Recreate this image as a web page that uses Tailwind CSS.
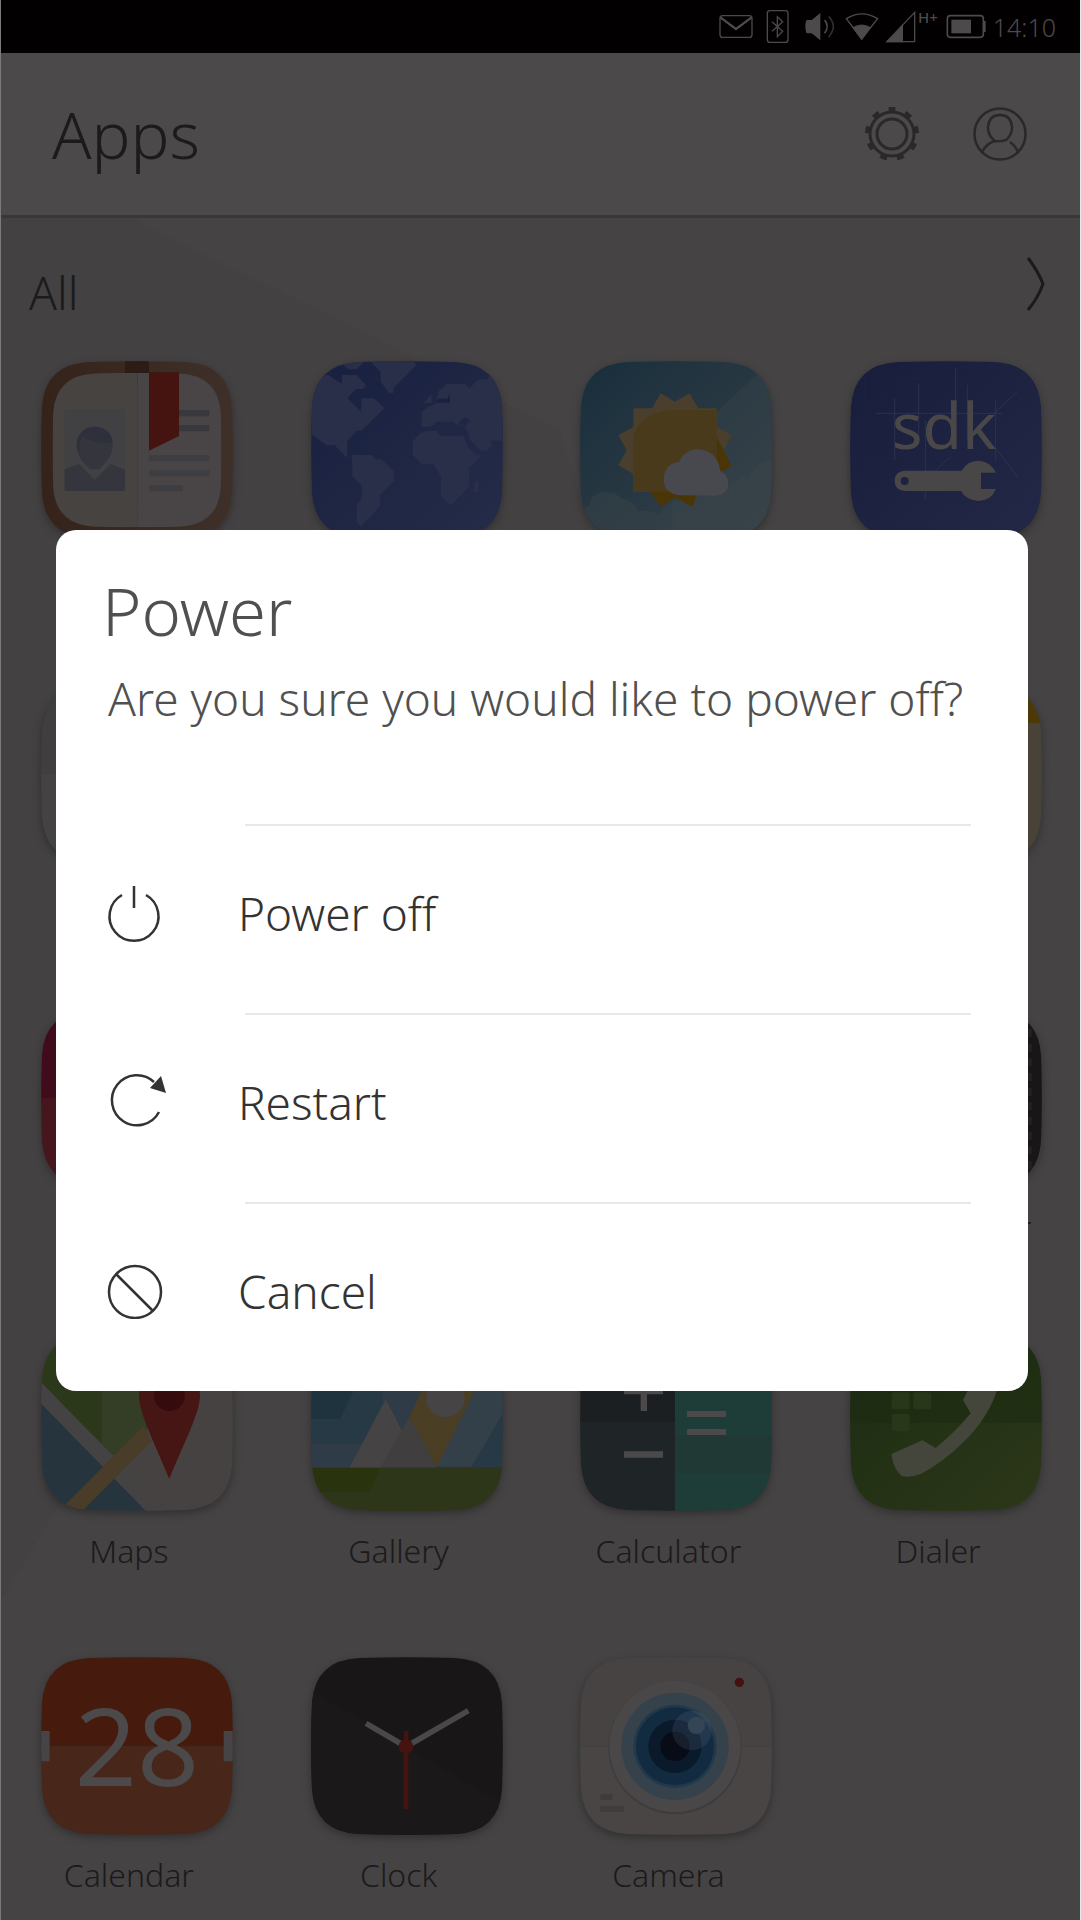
<!DOCTYPE html>
<html lang="en">
<head>
<meta charset="utf-8">
<meta name="viewport" content="width=device-width, initial-scale=1">
<title>Power</title>
<script src="https://cdn.jsdelivr.net/npm/@tailwindcss/browser@4"></script>
</head>
<body class="relative flex min-h-screen flex-col overflow-x-hidden border-r border-l border-r-[#e8e8e8] border-l-[#7c7a7b] bg-[#454344] font-['Noto_Sans','Open_Sans',sans-serif] font-light text-[#1c1a1b]">

<!-- Shared icon outline -->
<svg class="absolute size-0" aria-hidden="true">
  <defs>
    <clipPath id="tile"><path d="M144 3Q288-2 432 3Q564 9 573 138Q578 267 573 396Q564 525 432 531Q288 536 144 531Q12 525 3 396Q-2 267 3 138Q12 9 144 3Z"/></clipPath>
    <linearGradient id="wood"><stop offset="0" stop-color="#35231a"/><stop offset="1" stop-color="#3e3029"/></linearGradient>
    <linearGradient id="ocean" x2="1" y2="1"><stop offset="0" stop-color="#182040"/><stop offset="1" stop-color="#252c48"/></linearGradient>
    <linearGradient id="sky" x2="1" y2="1"><stop offset="0" stop-color="#182e3c"/><stop offset="1" stop-color="#374148"/></linearGradient>
    <linearGradient id="blueprint" x2="1" y2="1"><stop offset="0" stop-color="#171d3b"/><stop offset="1" stop-color="#222846"/></linearGradient>
    <linearGradient id="leaf" x2="1" y2="1"><stop offset="0" stop-color="#1b2c12"/><stop offset="1" stop-color="#2d3719"/></linearGradient>
  </defs>
</svg>

<!-- Wallpaper facets -->
<svg class="absolute inset-0 h-full w-full" viewBox="0 0 1081 1920" preserveAspectRatio="none" aria-hidden="true">
  <path d="M0 218H130L560 430L640 700L55 1510L0 1600Z" fill="#434142"/>
</svg>

<header class="relative">
  <div class="flex h-[53px] items-center justify-end bg-[#020001] pr-6 text-[#4c4a4b]">
    <svg class="h-[35px] w-[34px]" viewBox="59 24 102 105" fill="none" stroke="currentColor" stroke-width="4" role="img" aria-label="Message"><rect x="62" y="44" width="96" height="65" rx="8"/><path d="M64 50L110 84L156 50" stroke-width="7"/></svg>
    <svg class="ml-[13px] h-[35px] w-[23px]" viewBox="201 24 69 105" fill="none" stroke="currentColor" stroke-width="4" role="img" aria-label="Bluetooth"><rect x="205" y="29" width="62" height="95" rx="8"/><path d="M219 62L251 91L235 107V47L251 62L219 91"/></svg>
    <svg class="ml-4 h-[35px] w-[30px]" viewBox="317 24 90 105" fill="none" stroke="currentColor" stroke-width="5" role="img" aria-label="Volume"><path d="M320 61Q320 57 325 57H337L363 36V118L337 97H325Q320 97 320 92Q316 77 320 61Z" fill="currentColor" stroke="none"/><path d="M376 57Q391 76 376 97"/><path d="M388 46Q416 76 388 108" opacity=".6"/></svg>
    <svg class="ml-[10px] h-[35px] w-[34px]" viewBox="437 24 102 105" fill="none" stroke="currentColor" stroke-width="4" role="img" aria-label="Wi-Fi"><path d="M441 53Q488 24 535 53L487 114Z"/><path d="M462 80Q488 65 512 80L487 114Z" fill="currentColor"/></svg>
    <svg class="ml-[6px] h-[35px] w-[32px]" viewBox="554 24 96 105" fill="none" stroke="currentColor" stroke-width="4" role="img" aria-label="Signal"><path d="M560 122L643 34V122Z"/><path d="M560 122L606 74V122Z" fill="currentColor"/></svg>
    <span class="mb-5 ml-px text-[15px] leading-4 font-medium">H+</span>
    <svg class="ml-2 h-[35px] w-[41px]" viewBox="735 24 123 105" fill="none" stroke="currentColor" stroke-width="5" role="img" aria-label="Battery"><rect x="739" y="44" width="108" height="65" rx="9"/><path d="M751 56H810V97H751Z" fill="currentColor" stroke="none"/><path d="M851 60V93" stroke-width="6"/></svg>
    <span class="ml-[6px] text-[25px] leading-8">14:10</span>
  </div>
  <div class="flex h-[165px] items-center justify-between border-b-3 border-[#393738] bg-[#4b4949] pr-[53px] pl-[51px]">
    <h1 class="text-[65px] leading-20">Apps</h1>
    <div class="flex gap-[54px] text-[#2a2829]">
      <button aria-label="Settings" class="size-[54px]"><svg viewBox="-27 -27 54 54" fill="none" stroke="currentColor" stroke-width="3"><circle r="22"/><circle r="15"/><circle r="24.500" stroke-width="5" pathLength="90" stroke-dasharray="4 6" stroke-dashoffset="24.500"/></svg></button>
      <button aria-label="Account" class="size-[54px]"><svg viewBox="-27 -27 54 54" fill="none" stroke="currentColor" stroke-width="2.500"><circle r="25.500"/><path d="M-5 7Q-12 2-12-7Q-11-19 0-19Q11-19 12-7Q12 1 6 6Q0 8-5 7Q-13 9-18 18M10 8Q15 11 18 18"/></svg></button>
    </div>
  </div>
</header>

<main class="relative grow pb-5">
  <div class="flex h-[143px] items-center justify-between pr-[34px] pl-7">
    <h2 class="pt-1 text-[46px] leading-[60px]">All</h2>
    <button aria-label="Show all" class="mb-3"><svg class="h-14 w-5" viewBox="0 0 20 56" fill="none" stroke="currentColor" stroke-width="3"><path d="M2 2Q12 15 17 28Q12 42 2 54"/></svg></button>
  </div>

  <div class="-mr-px grid auto-rows-[242px] grid-cols-4 gap-y-[82px] pl-px text-[32px] leading-12">
    <a href="#contacts" aria-label="Contacts" class="flex flex-col items-center">
      <svg class="h-[178px] w-48 drop-shadow-[0_3px_4px_rgba(0,0,0,0.3)]" viewBox="0 0 576 534"><g clip-path="url(#tile)"><path fill="url(#wood)" d="M0 0H576V534H0Z"/><path fill="#2b1c15" d="M252 0H324V60H252Z"/><g transform="translate(34 35) scale(.882 .87)" clip-path="url(#tile)"><path fill="#474340" d="M0 0H290V534H0Z"/><path fill="#494546" d="M290 0H576V534H290Z"/></g>
      <g transform="translate(-63 -63)"><path fill="#414043" d="M134 208H315V453H134Z"/><path fill="#34353d" d="M134 388L177 372L224 420L272 372L315 390V453H134Z"/><path fill="#34353d" d="M170 315C170 280 195 260 224 260S278 280 278 315S255 368 238 388H210C190 368 170 350 170 315Z"/><path fill="#2e303b" d="M170 320C170 280 195 260 224 260S280 280 276 308Q220 312 190 290Q176 300 178 340Z"/><path fill="#38383f" d="M477 210H568V229H477ZM477 255H568V274H477Z"/><path fill="#3d3d42" d="M387 346H568V364H387ZM387 391H568V409H387ZM387 436H488V454H387Z"/><path fill="#451411" d="M387 97H477V288L387 332Z"/></g></g></svg>
    </a>
    <a href="#browser" aria-label="Browser" class="flex flex-col items-center">
      <svg class="h-[178px] w-48 drop-shadow-[0_3px_4px_rgba(0,0,0,0.3)]" viewBox="0 0 576 534"><g clip-path="url(#tile)"><path fill="url(#ocean)" d="M0 0H576V534H0Z"/><g transform="translate(-873 -63)" fill="#292e49"><path d="M870 105H925L965 132L967 105H1010L1038 135L1030 147H1008L982 175L1023 215L1025 175H1062L1093 205L1025 272H1010L982 303V355L943 315H918L870 280Z"/><path d="M962 68L985 88H1010L1035 63H965ZM1055 70L1082 95V125L1108 160H1120V145L1190 75L1178 60H1060ZM996 345H1055L1068 358H1085L1122 395V425L1105 440L1080 465V498L1022 562L1010 545V498L1026 470V438L997 408Z"/><path d="M1205 260V215L1225 200L1250 190L1255 155L1280 132H1335L1348 145L1375 118H1400L1425 95H1460V302H1410L1418 318L1400 332H1382L1348 298V285L1335 260L1350 240L1335 232L1318 245L1320 258L1295 245H1250L1235 260ZM1210 190L1235 162V188Z"/><path d="M1200 280L1220 273H1250L1260 287H1328L1345 320L1370 345H1387L1347 385V440L1292 498L1263 470V410L1240 373H1205L1178 345V305ZM1362 430L1376 415V457H1362Z"/><path fill="#1a213e" d="M1255 176L1282 176L1290 162V188H1250Z"/></g></g></svg>
    </a>
    <a href="#weather" aria-label="Weather" class="flex flex-col items-center">
      <svg class="h-[178px] w-48 drop-shadow-[0_3px_4px_rgba(0,0,0,0.3)]" viewBox="0 0 576 534"><g clip-path="url(#tile)"><path fill="url(#sky)" d="M0 0H576V534H0Z"/><g transform="translate(-63 -63)"><path fill="#39444a" opacity=".35" d="M640 60L340 340V600H640Z"/><path fill="#3b474c" opacity=".4" d="M63 505Q85 505 92 495Q95 460 135 456Q175 456 185 475Q225 480 236 515Q260 505 300 522Q320 480 400 470Q520 450 545 410H570Q590 365 640 357V600H63Z"/>
      <path fill="#4a3e2c" d="M305 160L348 185L392 160L418 205H473V260L518 286L494 331L518 378L473 402V455H418L400 500L348 472L305 500L275 455H223V402L178 376L203 331L178 286L223 260V205H279Z"/><path fill="#4a3506" d="M494 331L518 378L473 402V290ZM275 455H418L400 500L348 472L305 500Z"/><path fill="#4a3a1c" d="M223 455V290Q245 215 340 210H473V350L450 455Z"/><path fill="#48494e" d="M365 466Q314 462 314 415Q318 370 360 366Q378 328 418 328Q475 332 484 393Q508 405 508 430Q505 466 470 467Z"/></g></g></svg>
    </a>
    <a href="#sdk" class="flex flex-col items-center">
      <svg class="h-[178px] w-48 drop-shadow-[0_3px_4px_rgba(0,0,0,0.3)]" viewBox="0 0 576 534" role="img" aria-label="sdk"><g clip-path="url(#tile)"><path fill="url(#blueprint)" d="M0 0H576V534H0Z"/><g transform="translate(-873 -63)"><path stroke="#343a58" stroke-width="2" fill="none" d="M1007 175V360M1079 130V300M1190 85V200M1225 135V300M1310 180V360M1099 240V480M950 220H1330M1300 225L1375 155M1310 325L1375 410M1130 392L1175 350"/><path stroke="#252b48" fill="none" d="M873 115H1446M873 362H1446M873 482H1446M918 63V600M1068 63V600M1390 63V600"/><text x="998" y="327" class="font-normal" font-size="193" fill="#494748">sdk</text><path fill="#484647" fill-rule="evenodd" d="M1037 392H1208Q1225 362 1258 362Q1295 364 1311 398H1266V447H1311Q1297 482 1258 483Q1220 480 1206 453H1037Q1007 450 1007 422T1037 392ZM1037 411A12 12 0 1 0 1037 435A12 12 0 1 0 1037 411Z"/></g></g></svg>
    </a>

    <a href="#app-5" aria-label="App" class="flex flex-col items-center">
      <svg class="h-[178px] w-48 drop-shadow-[0_3px_4px_rgba(0,0,0,0.3)]" viewBox="0 0 576 534"><g clip-path="url(#tile)"><path fill="#403e3f" d="M0 0H576V267H0Z"/><path fill="#444243" d="M0 267H576V534H0Z"/></g></svg>
    </a>
    <a href="#notes" aria-label="Notes" class="col-start-4 flex flex-col items-center">
      <svg class="h-[178px] w-48 drop-shadow-[0_3px_4px_rgba(0,0,0,0.3)]" viewBox="0 0 576 534"><g clip-path="url(#tile)"><path fill="#4d3907" d="M0 0H576V114H0Z"/><path fill="#494236" d="M0 114H576V534H0Z"/></g></svg>
    </a>

    <a href="#music" aria-label="Music" class="flex flex-col items-center">
      <svg class="h-[178px] w-48 drop-shadow-[0_3px_4px_rgba(0,0,0,0.3)]" viewBox="0 0 576 534"><g clip-path="url(#tile)"><path fill="#400b1b" d="M0 0H576V267H0Z"/><path fill="#45161e" d="M0 267H576V534H0Z"/></g></svg>
    </a>
    <a href="#media" class="col-start-4 flex flex-col items-center">
      <svg class="h-[178px] w-48 drop-shadow-[0_3px_4px_rgba(0,0,0,0.3)]" viewBox="0 0 576 534" aria-hidden="true"><g clip-path="url(#tile)"><path fill="#181617" d="M0 0H576V534H0Z"/><path stroke="#242223" stroke-width="14" stroke-dasharray="24 20" d="M538 60V480"/></g></svg>
      <span class="mt-4 pr-4 whitespace-nowrap">Media Player</span>
    </a>

    <a href="#maps" class="flex flex-col items-center">
      <svg class="h-[178px] w-48 drop-shadow-[0_3px_4px_rgba(0,0,0,0.3)]" viewBox="0 0 576 534" aria-hidden="true"><g clip-path="url(#tile)"><g transform="translate(-63 -39)"><path fill="#464241" d="M60 30H640V580H60Z"/><path fill="#2c381a" d="M60 30H380V330L280 406L60 190Z"/><path fill="#343d26" d="M245 200H380V330L280 406L245 370Z"/><path fill="#26343e" d="M60 247L380 575H60Z"/><path fill="#444243" d="M60 183L440 575H380L60 247Z"/><path fill="#493c28" d="M370 318L130 560V580H180L395 362Z"/><path fill="#461615" d="M357 225Q357 140 448 140T540 225C540 280 495 360 448 477C400 360 357 280 357 225Z"/><circle cx="448" cy="227" r="46" fill="#360b0d"/></g></g></svg>
      <span class="mt-4 pr-4">Maps</span>
    </a>
    <a href="#gallery" class="flex flex-col items-center">
      <svg class="h-[178px] w-48 drop-shadow-[0_3px_4px_rgba(0,0,0,0.3)]" viewBox="0 0 576 534" aria-hidden="true"><g clip-path="url(#tile)"><g transform="translate(-873 -39)"><path fill="#273944" d="M870 30H1450V445H870Z"/><path fill="#1f333e" d="M870 30H1090L960 297H870Z"/><path fill="#2f3b46" d="M870 370H1080L1000 445H870ZM1100 30H1300L1150 330L1085 240Z"/><path fill="#333f49" d="M1460 180V260L1355 440H1248L1380 180Z"/><path fill="#4a3e24" d="M1215 190H1375L1250 443L1168 292Z"/><path fill="#454344" d="M1097 238L1146 331L1168 292L1250 443H988Z"/><path fill="#403e3f" d="M1146 331L1168 292L1250 443H1080Z"/><circle cx="1276" cy="234" r="58" fill="#464445"/><path fill="#29340f" d="M870 443H1450V580H870Z"/><path fill="#303820" opacity=".7" d="M1080 443H1450V515H1050ZM870 515H1450V580H870Z"/></g></g></svg>
      <span class="mt-4 pr-4">Gallery</span>
    </a>
    <a href="#calculator" class="flex flex-col items-center">
      <svg class="h-[178px] w-48 drop-shadow-[0_3px_4px_rgba(0,0,0,0.3)]" viewBox="0 0 576 534" aria-hidden="true"><g clip-path="url(#tile)"><g transform="translate(-63 -39)"><path fill="#1b1f22" d="M60 30H348V308H60Z"/><path fill="#1f2427" d="M60 308H348V580H60Z"/><path fill="#1e3c38" d="M348 30H640V580H348Z"/><path fill="#213935" d="M348 345H640V460H348Z"/><path fill="#4b494a" d="M195 205H245V155H264V205H312V223H264V273H245V223H195ZM195 394H312V413H195ZM384 273H501V291H384ZM384 327H501V345H384Z"/></g></g></svg>
      <span class="mt-4 pr-4">Calculator</span>
    </a>
    <a href="#dialer" class="flex flex-col items-center">
      <svg class="h-[178px] w-48 drop-shadow-[0_3px_4px_rgba(0,0,0,0.3)]" viewBox="0 0 576 534" aria-hidden="true"><g clip-path="url(#tile)"><path fill="url(#leaf)" d="M0 0H576V534H0Z"/><path fill="#1d2c11" opacity=".6" d="M0 0H576V269H0Z"/><g transform="translate(-873 -39)"><g fill="#283719"><rect x="998" y="217" width="54" height="51" rx="8"/><rect x="1063" y="217" width="54" height="51" rx="8"/><rect x="998" y="282" width="54" height="52" rx="8"/></g><path fill="#44453b" d="M997 402L1090 361L1130 384Q1190 335 1235 280L1212 240L1230 205H1316Q1290 290 1220 360Q1150 430 1085 462Q1050 475 1028 468Q1002 445 997 402Z"/></g></g></svg>
      <span class="mt-4 pr-4">Dialer</span>
    </a>

    <a href="#calendar" class="flex flex-col items-center">
      <svg class="h-[178px] w-48 drop-shadow-[0_3px_4px_rgba(0,0,0,0.3)]" viewBox="0 0 576 534" role="img" aria-label="28"><g clip-path="url(#tile)"><path fill="#461a0d" d="M0 0H576V268H0Z"/><path fill="#48261a" d="M0 268H576V534H0Z"/><path fill="#464445" d="M0 222H26V313H0ZM548 222H576V313H548Z"/><text x="288" y="386" text-anchor="middle" class="font-normal" font-size="326" fill="#4b494a">28</text></g></svg>
      <span class="mt-4 pr-4">Calendar</span>
    </a>
    <a href="#clock" class="flex flex-col items-center">
      <svg class="h-[178px] w-48 drop-shadow-[0_3px_4px_rgba(0,0,0,0.3)]" viewBox="0 0 576 534" aria-hidden="true"><g clip-path="url(#tile)"><path fill="#181617" d="M0 0H576V534H0Z"/><path fill="#1a1819" d="M0 100L576 440V534H0Z"/><g transform="translate(-873 -81)" fill="none"><path stroke="#4a4849" stroke-width="17" d="M1038 280L1158 350L1345 242"/><path stroke="#451310" stroke-width="14" d="M1158 303V538"/><circle cx="1158" cy="350" r="22" fill="#451310"/></g></g></svg>
      <span class="mt-4 pr-4">Clock</span>
    </a>
    <a href="#camera" class="flex flex-col items-center">
      <svg class="h-[178px] w-48 drop-shadow-[0_3px_4px_rgba(0,0,0,0.3)]" viewBox="0 0 576 534" aria-hidden="true"><g clip-path="url(#tile)"><path fill="#474342" d="M0 0H576V268H0Z"/><path fill="#494545" d="M0 268H576V534H0Z"/><g transform="translate(-63 -81)"><circle cx="348" cy="353" r="200" fill="#403c3c"/><circle cx="348" cy="349" r="197" fill="#494748"/><circle cx="348" cy="349" r="161" fill="#35424c"/><circle cx="348" cy="349" r="125" fill="#21394a"/><circle cx="348" cy="349" r="117" fill="#132b40"/><circle cx="348" cy="349" r="80" fill="#0b1a2a"/><circle cx="348" cy="349" r="44" fill="#070c17"/><circle cx="399" cy="302" r="59" fill="#8090a8" opacity=".14"/><circle cx="412" cy="286" r="26" fill="#344656"/><circle cx="541" cy="157" r="14" fill="#451211"/><path fill="#403c3b" d="M124 492H160V510H124ZM124 528H195V546H124Z"/></g></g></svg>
      <span class="mt-4 pr-4">Camera</span>
    </a>
  </div>
</main>

<!-- Power dialog -->
<div class="absolute inset-0 flex items-center pr-[52px] pl-[55px]">
  <section role="dialog" aria-modal="true" aria-labelledby="dialog-title" class="w-full rounded-[20px] bg-white pt-10 text-[46px] leading-14 text-[#333]">
    <h2 id="dialog-title" class="pl-[46px] text-[67px] leading-20 text-[#505050]">Power</h2>
    <p class="mt-5 mb-[98px] pl-[52px] whitespace-nowrap text-[#505050]">Are you sure you would like to power off?</p>
    <hr class="mr-[57px] ml-[189px] border-t-2 border-[#e8e8e8]">
    <button class="flex h-[187px] w-full items-center gap-[75px] pb-3 pl-[51px] text-left">
      <svg class="size-14 overflow-visible" viewBox="0 0 56 56" fill="none" stroke="currentColor" stroke-width="2.500" aria-hidden="true"><path d="M15 10A24.500 24.500 0 1 0 39 10M27 1V23"/></svg>
      <span>Power off</span>
    </button>
    <hr class="mr-[57px] ml-[189px] border-t-2 border-[#e8e8e8]">
    <button class="flex h-[187px] w-full items-center gap-[75px] pb-3 pl-[51px] text-left">
      <svg class="size-14 overflow-visible" viewBox="0 0 56 56" fill="none" stroke="currentColor" stroke-width="2.500" aria-hidden="true"><path d="M52 38A25 25 0 1 1 47 8"/><path d="M43 14L54 2L59 19Z" fill="currentColor" stroke="none"/></svg>
      <span>Restart</span>
    </button>
    <hr class="mr-[57px] ml-[189px] border-t-2 border-[#e8e8e8]">
    <button class="flex h-[187px] w-full items-center gap-[75px] pb-3 pl-[51px] text-left">
      <svg class="size-14" viewBox="0 0 56 56" fill="none" stroke="currentColor" stroke-width="2.500" aria-hidden="true"><circle cx="28" cy="29" r="26"/><path d="M9 11L46 48"/></svg>
      <span>Cancel</span>
    </button>
  </section>
</div>
</body>
</html>
